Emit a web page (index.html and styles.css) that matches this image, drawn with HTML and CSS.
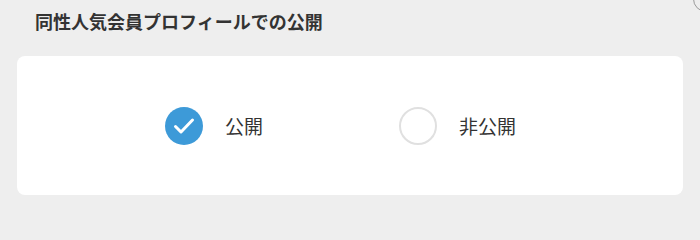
FILE: index.html
```html
<!DOCTYPE html>
<html lang="ja">
<head>
<meta charset="utf-8">
<link rel="stylesheet" href="styles.css">
</head>
<body>
<div class="page">
  <span class="corner-ring"></span>
  <h2 class="title">同性人気会員プロフィールでの公開</h2>
  <div class="card">
    <label class="option">
      <span class="radio radio-on">
        <svg viewBox="0 0 38 38" width="38" height="38"><polyline points="10.5,19.5 16,25 27.5,13" fill="none" stroke="#fff" stroke-width="3" stroke-linecap="round" stroke-linejoin="round"/></svg>
      </span>
      <span class="label">公開</span>
    </label>
    <label class="option">
      <span class="radio radio-off"></span>
      <span class="label">非公開</span>
    </label>
  </div>
</div>
</body>
</html>
```
FILE: styles.css
```css
html, body {
  margin: 0;
  padding: 0;
  background: #eeeeee;
}
.page {
  position: relative;
  width: 700px;
  height: 205px;
  overflow: hidden;
  font-family: "Noto Sans CJK JP", "Noto Sans", sans-serif;
  color: #333333;
}
.corner-ring {
  position: absolute;
  left: 693px;
  top: -14px;
  width: 26px;
  height: 26px;
  box-sizing: border-box;
  border: 1px solid #9a9a9a;
  border-radius: 50%;
}
.title {
  margin: 0;
  padding: 8px 0 0 35px;
  font-size: 18px;
  line-height: 26px;
  font-weight: 700;
  color: #333333;
}
.card {
  margin: 22px 17px 0;
  height: 139px;
  background: #ffffff;
  border-radius: 8px;
  display: flex;
  align-items: center;
  padding-left: 148px;
  gap: 136px;
}
.option {
  display: flex;
  align-items: center;
  gap: 22px;
}
.radio {
  width: 38px;
  height: 38px;
  border-radius: 50%;
  box-sizing: border-box;
  display: flex;
}
.radio-on {
  background: #3d9ad8;
}
.radio-off {
  border: 2px solid #e0e0e0;
  background: #ffffff;
}
.label {
  font-size: 19px;
  line-height: 26px;
  color: #333333;
}
```
